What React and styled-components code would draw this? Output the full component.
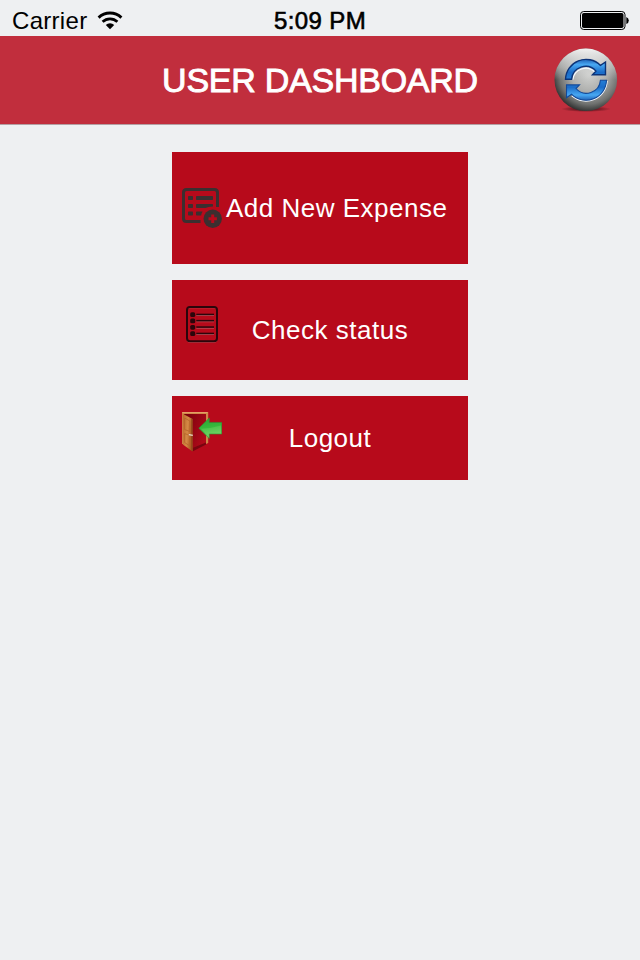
import React from 'react'
import styled, { createGlobalStyle } from 'styled-components'

const menuItems = [
    { label: 'Add New Expense', icon: AddExpenseIcon, height: 112, drop: 0, wide: true },
    { label: 'Check status', icon: StatusIcon, height: 100, drop: 12 },
    { label: 'Logout', icon: LogoutIcon, height: 84, drop: 12 },
]

const App = () => {
    return (
        <Screen>
            <GlobalStyle />
            {/* Status bar */}
            <StatusBar>
                <Carrier>
                    Carrier
                    <WifiIcon />
                </Carrier>
                <Clock>5:09 PM</Clock>
                <BatteryWrapper>
                    <BatteryIcon />
                </BatteryWrapper>
            </StatusBar>

            {/* Header */}
            <Header>
                <HeaderTitle>USER DASHBOARD</HeaderTitle>
                <RefreshButton aria-label="Refresh">
                    <RefreshIcon />
                </RefreshButton>
            </Header>

            {/* Menu */}
            <Menu>
                {menuItems.map(({ label, icon: Icon, height, drop, wide }) => (
                    <MenuButton key={label} $height={height}>
                        <MenuIcon $drop={drop}>
                            <Icon />
                        </MenuIcon>
                        <MenuLabel $wide={wide}>{label}</MenuLabel>
                    </MenuButton>
                ))}
            </Menu>
        </Screen>
    )
}

export default App

function WifiIcon() {
    return (
        <svg width="26" height="19" viewBox="0 0 26 19" fill="none" stroke="#000">
            <path d="M1.6 6.6 A16.5 16.5 0 0 1 24.4 6.6" strokeWidth="2.9" />
            <path d="M5.6 10.8 A10.7 10.7 0 0 1 20.4 10.8" strokeWidth="2.7" />
            <path d="M8.8 14 A6 6 0 0 1 17.2 14 L13 18.3 Z" fill="#000" stroke="none" />
        </svg>
    )
}

function BatteryIcon() {
    return (
        <svg width="50" height="20" viewBox="0 0 50 20">
            <rect x="0.5" y="0.5" width="44.5" height="18" rx="3.2" fill="none" stroke="#000" />
            <rect x="2" y="2" width="41.5" height="15" rx="1.8" fill="#000" />
            <path d="M46.3 6 Q48.8 7 48.8 9.5 Q48.8 12 46.3 13 Z" fill="#000" />
        </svg>
    )
}

function RefreshIcon() {
    const arrow = "M11.5 31.3 A20.5 20.5 0 0 1 46.5 17.4 L51.5 14 V26.7 H38.5 L42 23.1 A14 14 0 0 0 17.6 31.3 Z"
    return (
        <svg width="64" height="64" viewBox="0 0 64 64">
            <defs>
                <radialGradient id="ball" cx="0.55" cy="0.42" r="0.6">
                    <stop offset="0" stopColor="#d0d1cf" />
                    <stop offset="0.45" stopColor="#aeafad" />
                    <stop offset="0.78" stopColor="#707270" />
                    <stop offset="1" stopColor="#2c2e2d" />
                </radialGradient>
                <linearGradient id="shine" x1="0" y1="0" x2="0" y2="1">
                    <stop offset="0" stopColor="#fff" stopOpacity="0.9" />
                    <stop offset="0.3" stopColor="#e0e1e0" stopOpacity="0.5" />
                    <stop offset="0.5" stopColor="#d0d0d0" stopOpacity="0" />
                </linearGradient>
                <linearGradient id="blue" gradientUnits="userSpaceOnUse" x1="0" y1="10" x2="0" y2="32">
                    <stop offset="0" stopColor="#1650a8" />
                    <stop offset="0.3" stopColor="#48a8f2" />
                    <stop offset="0.65" stopColor="#1a6cc8" />
                    <stop offset="1" stopColor="#2580d8" />
                </linearGradient>
                <radialGradient id="shadow">
                    <stop offset="0" stopColor="#200408" stopOpacity="0.9" />
                    <stop offset="1" stopColor="#200408" stopOpacity="0" />
                </radialGradient>
            </defs>
            <ellipse cx="32" cy="61" rx="25" ry="3" fill="url(#shadow)" />
            <circle cx="31.8" cy="31.8" r="31.3" fill="url(#ball)" />
            <circle cx="31.8" cy="31.8" r="31.3" fill="url(#shine)" />
            <g fill="none" stroke="#f4f9ff" strokeWidth="1.2">
                <path d="M18.8 31.6 A13 13 0 0 1 40.8 24" />
                <path d="M53.2 33 A21.4 21.4 0 0 1 17.8 47.8" />
            </g>
            <path d={arrow} fill="url(#blue)" stroke="#0d3478" strokeWidth="1.4" />
            <path d={arrow} transform="rotate(180 32 31.8)" fill="url(#blue)" stroke="#124a9a" strokeWidth="1.1" />
        </svg>
    )
}

function AddExpenseIcon() {
    return (
        <svg width="40" height="40" viewBox="0 0 40 40" fill="#3b2f30">
            <path
                d="M18.5 33.5 H4.5 Q1.5 33.5 1.5 30.5 V4.5 Q1.5 1.5 4.5 1.5 H32.5 Q35.5 1.5 35.5 4.5 V19"
                fill="none"
                stroke="#3b2f30"
                strokeWidth="3"
            />
            <rect x="6" y="8" width="5" height="4" rx="0.8" />
            <rect x="14" y="8" width="17" height="4" rx="0.8" />
            <rect x="6" y="16" width="5" height="4" rx="0.8" />
            <path d="M14.8 16 H30.2 Q31 16 31 16.8 V18.5 Q26.5 18.4 23.5 20 H14.8 Q14 20 14 19.2 V16.8 Q14 16 14.8 16 Z" />
            <rect x="6" y="23.5" width="5" height="4" rx="0.8" />
            <path d="M14.8 23.5 H20.6 Q19.4 25.4 19.1 27.5 H14.8 Q14 27.5 14 26.7 V24.3 Q14 23.5 14.8 23.5 Z" />
            <circle cx="30.7" cy="30.7" r="9.2" />
            <path d="M30.7 26.5 V34.9 M26.5 30.7 H34.9" stroke="#b70a1b" strokeWidth="3" />
        </svg>
    )
}

function StatusIcon() {
    const rows = [10.5, 16.7, 23.1, 29.5]
    return (
        <svg width="40" height="40" viewBox="0 0 40 40">
            <rect x="5" y="3.8" width="30" height="34.6" rx="3" fill="none" stroke="#c9505c" strokeWidth="0.8" />
            <rect x="5" y="3" width="30" height="34.3" rx="3" fill="none" stroke="#2a060b" strokeWidth="2" />
            {rows.map((y) => (
                <g key={y}>
                    <rect x="8.2" y={y - 2.2} width="5" height="4.8" rx="1.6" fill="#2a060b" />
                    <rect x="14.3" y={y + 0.6} width="17.7" height="0.9" fill="#b85a62" />
                    <rect x="14.3" y={y - 0.8} width="17.7" height="1.5" fill="#2a060b" />
                </g>
            ))}
        </svg>
    )
}

function LogoutIcon() {
    return (
        <svg width="40" height="40" viewBox="0 0 40 40">
            <defs>
                <linearGradient id="wood" x1="0" y1="0" x2="1" y2="0.3">
                    <stop offset="0" stopColor="#b96a2b" />
                    <stop offset="0.55" stopColor="#d58a45" />
                    <stop offset="1" stopColor="#a9571f" />
                </linearGradient>
                <linearGradient id="room" x1="0" y1="0" x2="1" y2="0.6">
                    <stop offset="0" stopColor="#75000c" />
                    <stop offset="1" stopColor="#b20a1a" />
                </linearGradient>
                <linearGradient id="green" x1="0" y1="0" x2="0.2" y2="1">
                    <stop offset="0" stopColor="#2c9f35" />
                    <stop offset="0.5" stopColor="#35b83c" />
                    <stop offset="1" stopColor="#6fd060" />
                </linearGradient>
            </defs>
            <path d="M2 2 H24 V31 L10.5 39 Z" fill="url(#room)" />
            <path d="M10.5 39.5 V36 L24 30.5 V32.5 Z" fill="#78050f" />
            <path d="M0 32 V0 H26.2 V31 L24 32 V2 H2 V32 Z" fill="#cf8548" />
            <path d="M0.4 0.6 H25.6" stroke="#e9ac72" strokeWidth="0.8" />
            <path d="M0.8 1.8 L10.6 7 V39.6 L0.8 32.6 Z" fill="url(#wood)" />
            <path d="M9.9 6.8 V39" stroke="#8a421a" strokeWidth="1" />
            <path d="M2.6 6 L7.9 9 V19.5 L2.6 17.5 Z M2.6 21.5 L7.9 23.5 V34 L2.6 30.5 Z" fill="none" stroke="#b4642b" strokeWidth="0.8" />
            <path d="M6.8 22.6 L10.8 23.4" stroke="#ead9cd" strokeWidth="1.4" />
            <path d="M16.8 16.2 L27.3 6 V10.4 H39.8 V22 H27.3 V26.5 Z" fill="url(#green)" stroke="#289333" strokeWidth="0.6" />
            <path d="M19 16.8 Q29 16.5 39 13.5 V21.4 H26.8 V24.7 Z" fill="#8be27a" opacity="0.25" />
        </svg>
    )
}

const GlobalStyle = createGlobalStyle`
body {
    margin: 0;
    background: #eef0f2;
}
* {
    box-sizing: border-box;
}
`;
const Screen = styled.div`
height: 960px;
background: #eef0f2;
font-family: "Liberation Sans", Arial, sans-serif;
overflow: hidden;
`;
const StatusBar = styled.div`
display: grid;
grid-template-columns: 1fr auto 1fr;
height: 36px;
padding: 4px 10px 0 12px;
color: #000;
font-size: 24px;
line-height: 33px;
`;
const Carrier = styled.div`
display: flex;
gap: 10px;
letter-spacing: 0.3px;
svg {
    margin-top: 7px;
}
`;
const Clock = styled.div`
margin-right: 2px;
letter-spacing: 0.4px;
-webkit-text-stroke: 0.6px #000;
`;
const BatteryWrapper = styled.div`
display: flex;
justify-content: flex-end;
padding-top: 7px;
`;
const Header = styled.div`
display: grid;
grid-template-columns: 1fr auto 1fr;
align-items: center;
height: 89px;
padding: 0 22px;
background: #c12e3d;
border-bottom: 1px solid #b4a0a4;
`;
const HeaderTitle = styled.div`
grid-column: 2;
color: #fff;
font-size: 34px;
line-height: 40px;
letter-spacing: -0.25px;
-webkit-text-stroke: 0.9px #fff;
`;
const RefreshButton = styled.button`
display: flex;
justify-self: end;
padding: 0;
border: 0;
background: none;
cursor: pointer;
`;
const Menu = styled.div`
display: flex;
flex-direction: column;
gap: 16px;
width: 296px;
margin: 27px auto 0;
`;
const MenuButton = styled.button`
display: flex;
align-items: center;
height: ${(props) => props.$height}px;
padding: 0 10px;
border: 0;
background: #b70a1b;
color: #fff;
font-family: inherit;
font-size: 26px;
cursor: pointer;
`;
const MenuIcon = styled.div`
display: flex;
margin-bottom: ${(props) => props.$drop}px;
`;
const MenuLabel = styled.div`
width: 216px;
padding-left: ${(props) => props.$wide ? '4px' : '0'};
text-align: ${(props) => props.$wide ? 'left' : 'center'};
letter-spacing: 0.5px;
white-space: nowrap;
`;
